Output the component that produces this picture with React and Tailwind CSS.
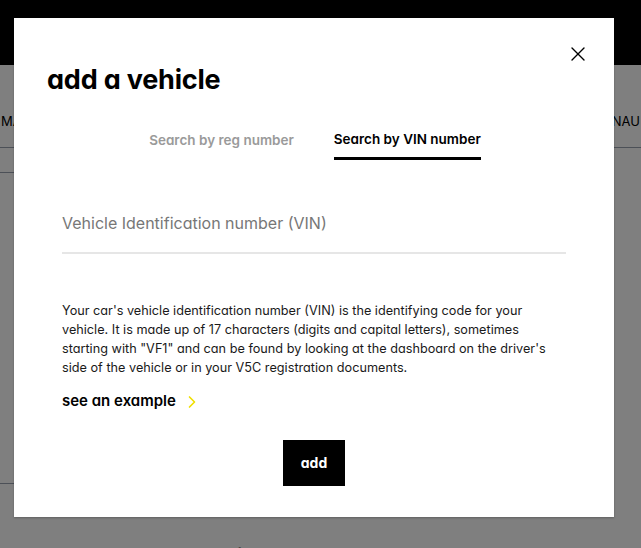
import { X, ChevronRight } from "lucide-react";

const font = "font-['Inter','Liberation_Sans',sans-serif] [font-feature-settings:'cv11','ss01']";

function BackgroundPage() {
  return (
    <div className="flex h-full flex-col bg-white">
      {/* Header */}
      <header className="h-[65px] shrink-0 bg-black" />

      {/* Nav */}
      <nav className="flex h-[83px] shrink-0 items-center justify-between border-b border-gray-400 pt-[32px] text-[13px] text-black">
        <span className="pl-[1px]">MA</span>
        <span className="pr-[1px]">ENAU</span>
      </nav>

      <div className="mt-[24px] h-[312px] w-[40px] shrink-0 border-y border-gray-400" />

      <h2 className="mt-[59px] shrink-0 pl-[230px] text-[24px] font-bold leading-[30px] text-black">li l</h2>
    </div>
  );
}

function Tabs() {
  return (
    <div className="mt-[31px] flex justify-center gap-[40px] pl-[2px] text-[13.5px] font-semibold">
      <button className="pb-[9px] text-[#9a9a9a]">Search by reg number</button>
      <button className="border-b-[3px] border-black pb-[8px] text-black">Search by VIN number</button>
    </div>
  );
}

function Modal() {
  return (
    <div
      role="dialog"
      className="absolute left-[14px] top-[18px] flex h-[499px] w-[600px] flex-col bg-white shadow-[0_1px_2px_rgba(0,0,0,0.25)]"
    >
      <button className="absolute right-[24px] top-[24px] text-black" aria-label="close">
        <X size={24} strokeWidth={1.4} />
      </button>

      <h1 className="ml-[33px] mt-[44px] text-[27px] font-bold leading-[36px] tracking-[-0.2px] text-black">
        add a vehicle
      </h1>

      <Tabs />

      <div className="mx-[48px] mt-[52px] border-b-2 border-[#e6e6e6] pb-[18px] text-[16px] leading-[22px] text-[#777]">
        Vehicle Identification number (VIN)
      </div>

      <p className="ml-[48px] mr-[56px] mt-[47px] text-[12.7px] leading-[19px] text-[#1a1a1a]">
        Your car's vehicle identification number (VIN) is the identifying code for your vehicle. It is made
        up of 17 characters (digits and capital letters), sometimes starting with "VF1" and can be found by
        looking at the dashboard on the driver's side of the vehicle or in your V5C registration documents.
      </p>

      <a className="ml-[48px] mt-[13px] flex items-center gap-[6px] text-[15px] font-semibold text-black" href="#">
        see an example
        <ChevronRight size={20} strokeWidth={2} className="text-[#efdf00]" />
      </a>

      <div className="mt-[27px] flex justify-center">
        <button className="h-[46px] w-[62px] bg-black text-[14px] font-bold text-white">add</button>
      </div>
    </div>
  );
}

export default function App() {
  return (
    <div className={`relative h-[548px] w-full overflow-hidden ${font}`}>
      <BackgroundPage />
      <div className="absolute inset-0 bg-black/50" />
      <Modal />
    </div>
  );
}
